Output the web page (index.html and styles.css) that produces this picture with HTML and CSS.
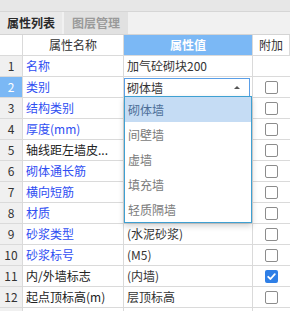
FILE: index.html
```html
<!DOCTYPE html>
<html lang="zh">
<head>
<meta charset="utf-8">
<link rel="stylesheet" href="styles.css">
</head>
<body>
<div class="top"></div>
<div class="tabs">
  <div class="tab active">属性列表</div>
  <div class="tab">图层管理</div>
</div>
<div class="grid">
  <div class="c idx hd"></div>
  <div class="c hname">属性名称</div>
  <div class="c hval">属性值</div>
  <div class="c hext">附加</div>

  <div class="c idx">1</div>
  <div class="c name blue">名称</div>
  <div class="c val">加气砼砌块200</div>
  <div class="c ext"></div>

  <div class="c idx sel">2</div>
  <div class="c name blue">类别</div>
  <div class="c val editing">
    <div class="select"><span>砌体墙</span><span class="arrow"></span></div>
    <div class="dropdown">
      <div class="opt on">砌体墙</div>
      <div class="opt">间壁墙</div>
      <div class="opt">虚墙</div>
      <div class="opt">填充墙</div>
      <div class="opt">轻质隔墙</div>
    </div>
  </div>
  <div class="c ext"><span class="cb"></span></div>

  <div class="c idx">3</div>
  <div class="c name blue">结构类别</div>
  <div class="c val"></div>
  <div class="c ext"><span class="cb"></span></div>

  <div class="c idx">4</div>
  <div class="c name blue">厚度(mm)</div>
  <div class="c val"></div>
  <div class="c ext"><span class="cb"></span></div>

  <div class="c idx">5</div>
  <div class="c name">轴线距左墙皮...</div>
  <div class="c val"></div>
  <div class="c ext"><span class="cb"></span></div>

  <div class="c idx">6</div>
  <div class="c name blue">砌体通长筋</div>
  <div class="c val"></div>
  <div class="c ext"><span class="cb"></span></div>

  <div class="c idx">7</div>
  <div class="c name blue">横向短筋</div>
  <div class="c val"></div>
  <div class="c ext"><span class="cb"></span></div>

  <div class="c idx">8</div>
  <div class="c name blue">材质</div>
  <div class="c val"></div>
  <div class="c ext"><span class="cb"></span></div>

  <div class="c idx">9</div>
  <div class="c name blue">砂浆类型</div>
  <div class="c val">(水泥砂浆)</div>
  <div class="c ext"><span class="cb"></span></div>

  <div class="c idx">10</div>
  <div class="c name blue">砂浆标号</div>
  <div class="c val">(M5)</div>
  <div class="c ext"><span class="cb"></span></div>

  <div class="c idx">11</div>
  <div class="c name">内/外墙标志</div>
  <div class="c val">(内墙)</div>
  <div class="c ext"><span class="cb checked"><svg viewBox="0 0 13 13" width="13" height="13"><path d="M3.2 6.8 L5.5 9 L9.8 4.2" fill="none" stroke="#fff" stroke-width="1.8" stroke-linecap="round" stroke-linejoin="round"/></svg></span></div>

  <div class="c idx">12</div>
  <div class="c name">起点顶标高(m)</div>
  <div class="c val">层顶标高</div>
  <div class="c ext"><span class="cb"></span></div>

  <div class="c idx"></div>
  <div class="c name"></div>
  <div class="c val"></div>
  <div class="c ext"><span class="cb"></span></div>
</div>
</body>
</html>
```

FILE: styles.css
```css
html, body {
  margin: 0;
  padding: 0;
  background: #fff;
  overflow: hidden;
}
body {
  font-family: "Noto Sans CJK SC", "Noto Sans", sans-serif;
  font-size: 12px;
  line-height: 1;
  color: #333;
}
.top {
  height: 12px;
  background: #e7e7e7;
  border-bottom: 1px solid #d6d6d6;
  box-sizing: border-box;
}
.tabs {
  height: 23px;
  background: #f1f1f1;
  border-bottom: 1px solid #d4d4d4;
  box-sizing: border-box;
  display: flex;
  gap: 2px;
}
.tab {
  width: 62px;
  display: flex;
  align-items: center;
  justify-content: center;
  font-weight: bold;
  background: #e1e1e1;
  color: #9a9a9a;
}
.tab + .tab {
  width: 64px;
}
.tab.active {
  background: #e9e9e9;
  color: #2a2a2a;
}
.grid {
  display: grid;
  grid-template-columns: 23px 101px 129px 1fr;
  grid-auto-rows: 21px;
}
.c {
  box-sizing: border-box;
  border-right: 1px solid #dadada;
  border-bottom: 1px solid #dadada;
  display: flex;
  align-items: center;
  white-space: nowrap;
  overflow: hidden;
}
.idx {
  background: #f0f0f0;
  justify-content: center;
  color: #333;
}
.idx.hd {
  background: #fff;
}
.idx.sel {
  background: #7bb8f5;
  color: #fff;
}
.hname {
  justify-content: center;
  color: #333;
}
.hval {
  justify-content: center;
  background: #7bb8f5;
  color: #fff;
  font-weight: bold;
}
.hext {
  justify-content: center;
  color: #333;
}
.name {
  padding-left: 3px;
  color: #222;
}
.name.blue {
  color: #2f4ef2;
}
.val {
  padding-left: 3px;
  color: #333;
}
.ext {
  justify-content: center;
  border-right: none;
}
.editing {
  padding: 0;
  overflow: visible;
  position: relative;
  align-items: flex-start;
}
.select {
  margin-top: 1px;
  width: 126px;
  height: 19px;
  box-sizing: border-box;
  border: 1px solid #5a9fe8;
  background: #fff;
  display: flex;
  align-items: center;
  justify-content: space-between;
  padding: 0 9px 0 2px;
  color: #333;
}
.arrow {
  width: 0;
  height: 0;
  border-left: 3px solid transparent;
  border-right: 3px solid transparent;
  border-bottom: 3px solid #555;
}
.dropdown {
  position: absolute;
  top: 19px;
  left: 0;
  width: 128px;
  box-sizing: border-box;
  border: 1px solid #3ea0d2;
  background: #fff;
  box-shadow: 0 3px 6px rgba(0, 0, 0, 0.18);
  z-index: 5;
}
.opt {
  height: 25px;
  display: flex;
  align-items: center;
  padding-left: 3px;
  color: #7a7a7a;
}
.opt.on {
  background: #c5dcf4;
  color: #4d6f98;
}
.cb {
  width: 13px;
  height: 13px;
  box-sizing: border-box;
  border: 1px solid #8c8c8c;
  border-radius: 2px;
  background: #fff;
  display: block;
}
.cb.checked {
  border: none;
  background: #2f7fe6;
}
.cb svg {
  display: block;
}
```
